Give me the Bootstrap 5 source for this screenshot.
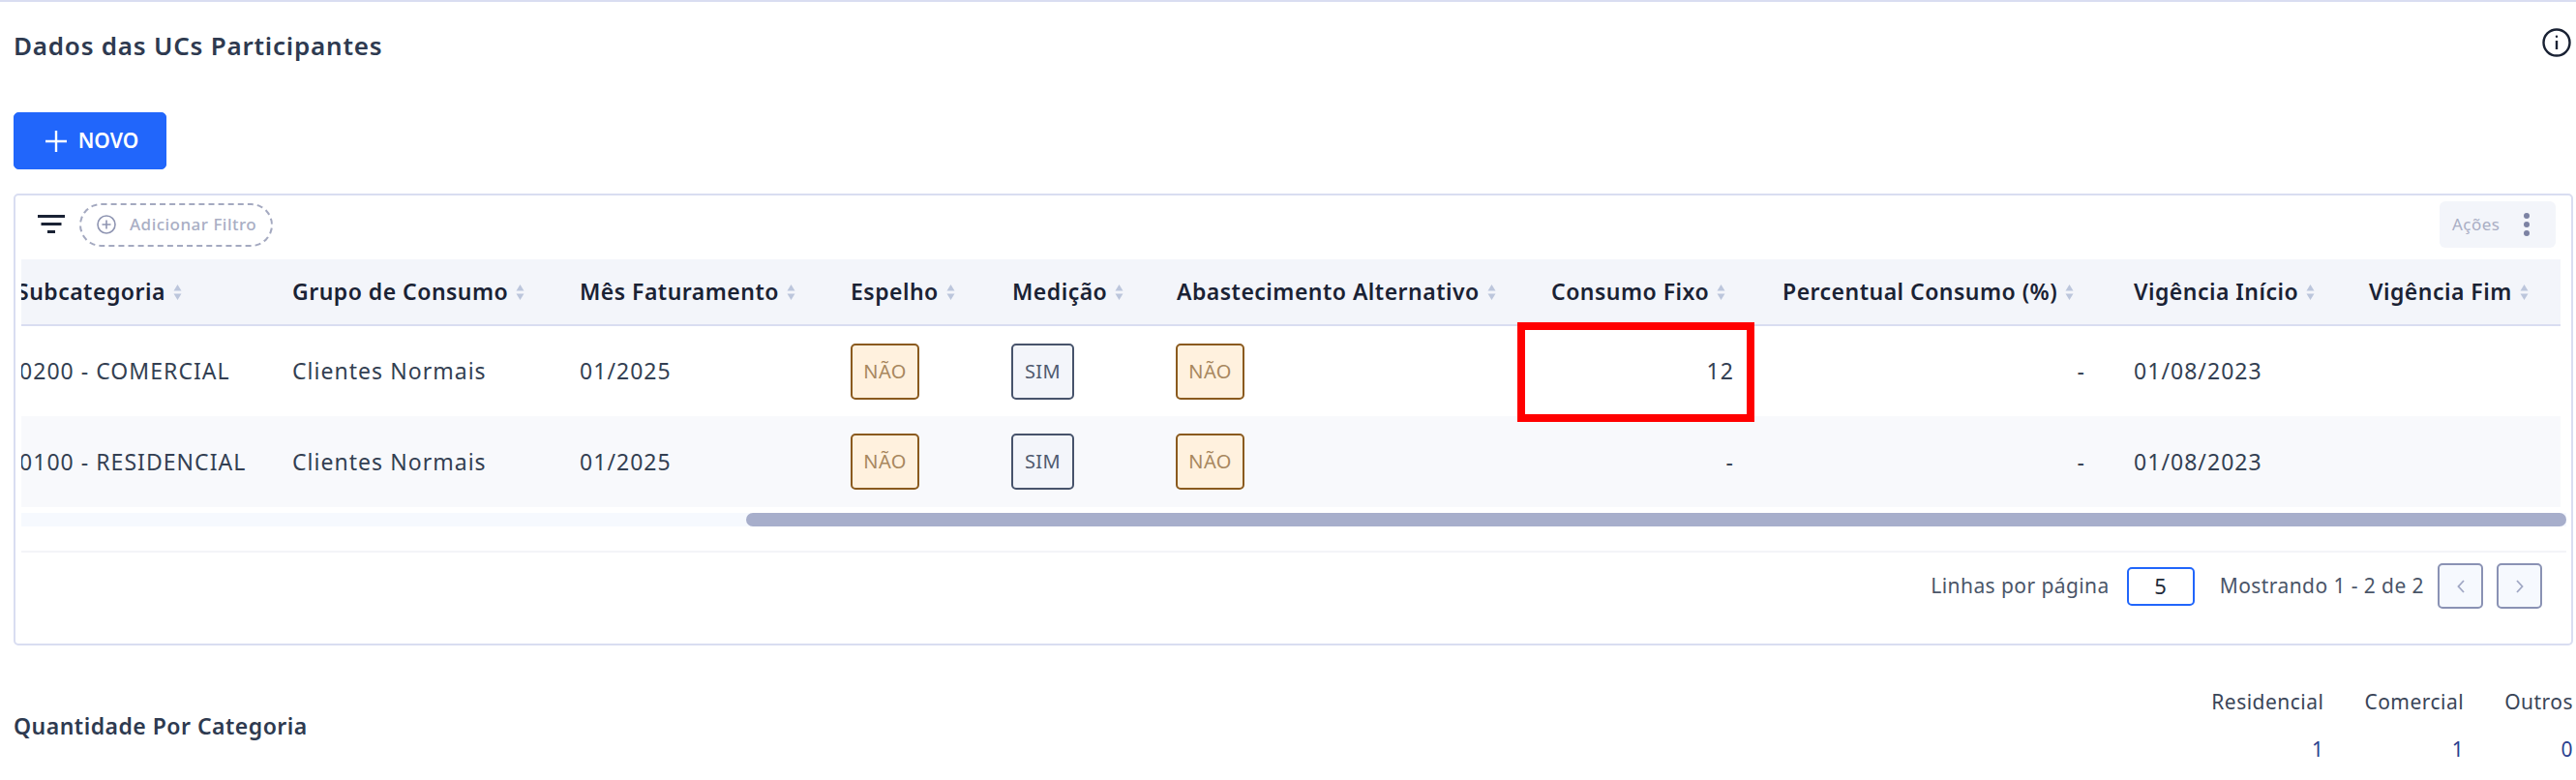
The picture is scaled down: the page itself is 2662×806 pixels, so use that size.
<!DOCTYPE html>
<html lang="pt-BR">
<head>
    <meta charset="UTF-8">
    <meta name="viewport" content="width=device-width, initial-scale=1.0">
    <title>Dados das UCs Participantes</title>
    <link href="https://cdn.jsdelivr.net/npm/bootstrap@5.3.0/dist/css/bootstrap.min.css" rel="stylesheet">
    <style>
        body {
            font-family: "Noto Sans", "Liberation Sans", sans-serif;
            letter-spacing: .03em;
            background: #fff;
            color: #2e3a50;
            overflow: hidden;
        }
        .page-wrap {
            height: 806px;
            border-top: 2px solid #d9ddf1;
            padding: 0 3px 0 14px;
            overflow: hidden;
        }
        .page-head {
            height: 114px;
            padding-top: 27px;
        }
        .page-title {
            font-size: 26px;
            font-weight: 600;
            line-height: 36px;
            letter-spacing: .03em;
            color: #2e3a50;
            margin: 0;
        }
        .info-icon { margin-right: 2px; }
        .btn-novo {
            width: 158px;
            height: 59px;
            padding: 0 0 0 4px;
            border-radius: 5px;
            background: #2166fb;
            border: 1px solid #2166fb;
            font-size: 21px;
            font-weight: 600;
            gap: 12px;
        }
        .grid-card {
            margin-top: 25px;
            height: 467px;
            border: 2px solid #d9ddf1;
            border-radius: 5px;
            padding: 6px 5px 0 6px;
        }
        .grid-tools { height: 48px; margin-bottom: 12px; }
        .filter-icon { margin-left: 17px; margin-right: 15px; }
        .add-filter {
            width: 200px;
            height: 45px;
            border: 2px dashed #a4a9c0;
            border-radius: 23px;
            padding-left: 16px;
            gap: 14px;
            color: #a9aec4;
            font-size: 17px;
            font-weight: 500;
            background: #fff;
            white-space: nowrap;
        }
        .acoes-box {
            width: 120px;
            height: 48px;
            margin-right: 11px;
            background: #f3f5fa;
            border-radius: 6px;
            padding: 0 27px 0 13px;
            color: #a9aec4;
            font-size: 17px;
        }
        .grid-scroll {
            margin-right: 6px;
            overflow: hidden;
        }
        .uc-table {
            table-layout: fixed;
            width: 2629px;
            margin: 0 0 0 -5px;
            font-size: 23px;
            color: #2e3a50;
            border-collapse: collapse;
        }
        .uc-table th {
            height: 68px;
            padding: 0;
            background: #f3f5fa;
            border-bottom: 2px solid #d9ddf1;
            color: #1a2234;
            font-weight: 600;
            vertical-align: middle;
            white-space: nowrap;
        }
        .uc-table td {
            height: 94px;
            padding: 0;
            border: 0;
            vertical-align: middle;
            white-space: nowrap;
            background: transparent;
            color: #333f52;
            letter-spacing: .045em;
        }
        .uc-table td:first-child { padding-left: 3px; }
        .uc-table tbody tr:nth-child(2) td { background: #f8f9fc; }
        .uc-table td:nth-child(5) .flag-tag { margin-left: -1px; }
        .uc-table td:nth-child(6) .flag-tag { margin-left: -1px; }
        .sort-icon { margin-left: 8px; vertical-align: -1px; }
        .col-sub { width: 285px; }
        .col-grupo { width: 297px; }
        .col-mes { width: 280px; }
        .col-esp { width: 167px; }
        .col-med { width: 170px; }
        .col-aba { width: 387px; }
        .col-con { width: 239px; }
        .col-per { width: 363px; }
        .col-ini { width: 243px; }
        .col-fim { width: 198px; }
        .num-cell { text-align: right; padding-right: 50px !important; }
        .flag-tag {
            display: inline-flex;
            align-items: center;
            justify-content: center;
            height: 58px;
            border-radius: 5px;
            border: 2px solid;
            font-size: 20px;
            letter-spacing: .02em;
        }
        .flag-no { width: 71px; background: #fff1de; border-color: #8a5a1e; color: #a8875e; }
        .flag-yes { width: 65px; background: #f3f5fa; border-color: #47536b; color: #4f5a6e; }
        .mark-cell { position: relative; }
        .red-mark {
            position: absolute;
            left: -35px;
            right: 29px;
            top: -4px;
            bottom: -6px;
            border: 8px solid #ff0000;
            pointer-events: none;
        }
        .fake-scroll {
            height: 14px;
            margin-top: 6px;
            background: #f6f9fe;
        }
        .fake-thumb {
            width: 1881px;
            height: 14px;
            background: #a7aecb;
            border-radius: 7px;
        }
        .pager-row {
            height: 60px;
            margin-top: 25px;
            border-top: 2px solid #f3f4f8;
            padding: 11px 25px 0 0;
            font-size: 21px;
            letter-spacing: .02em;
            color: #4a5568;
        }
        .pager-size {
            width: 70px;
            height: 40px;
            margin: 0 26px 0 18px;
            border: 2px solid #2166fb;
            border-radius: 5px;
            color: #222b3a;
            font-size: 22px;
        }
        .pager-btn {
            width: 47px;
            height: 47px;
            padding: 0;
            background: #f6f9fe;
            border: 2px solid #8a92b4;
            border-radius: 5px;
        }
        .pager-info { margin-right: 14px; }
        .pager-btn + .pager-btn { margin-left: 14px; }
        .bottom-row { margin-top: 43px; }
        .bottom-title {
            font-size: 23px;
            font-weight: 600;
            color: #2e3a50;
            margin: 0;
            padding-top: 27px;
        }
        .cat-col { text-align: right; margin-left: 42px; font-size: 21px; color: #3a4558; }
        .cat-col div:last-child { margin-top: 17px; color: #2b3f8f; }
    </style>
</head>
<body>
    <div class="page-wrap">
        <div class="page-head d-flex justify-content-between align-items-start">
            <h1 class="page-title">Dados das UCs Participantes</h1>
            <svg class="info-icon" width="30" height="30" viewBox="0 0 30 30" fill="none" stroke="#1a2234" stroke-width="2.4">
                <circle cx="15" cy="15" r="13.5"/>
                <path d="M15 13v9"/>
                <circle cx="15" cy="8.8" r="1.2" fill="#1a2234" stroke="none"/>
            </svg>
        </div>

        <button class="btn btn-primary btn-novo d-flex align-items-center justify-content-center" type="button">
            <svg width="22" height="22" viewBox="0 0 22 22" stroke="#fff" stroke-width="2.4"><path d="M11 0v22M0 11h22"/></svg>
            <span>NOVO</span>
        </button>

        <div class="card grid-card">
            <div class="grid-tools d-flex align-items-center">
                <svg class="filter-icon" width="28" height="20" viewBox="0 0 28 20" fill="#1a2234">
                    <rect x="0" y="0" width="28" height="3"/>
                    <rect x="3.5" y="8" width="21" height="3"/>
                    <rect x="10" y="16" width="8" height="3"/>
                </svg>
                <div class="add-filter d-flex align-items-center">
                    <svg width="20" height="20" viewBox="0 0 20 20" fill="none" stroke="#8f95b2" stroke-width="1.6">
                        <circle cx="10" cy="10" r="9"/>
                        <path d="M10 5.5v9M5.5 10h9"/>
                    </svg>
                    <span>Adicionar Filtro</span>
                </div>
                <div class="acoes-box ms-auto d-flex align-items-center justify-content-between">
                    <span>Ações</span>
                    <svg width="6" height="24" viewBox="0 0 6 24" fill="#7c82a3">
                        <circle cx="3" cy="3" r="3"/><circle cx="3" cy="12" r="3"/><circle cx="3" cy="21" r="3"/>
                    </svg>
                </div>
            </div>

            <div class="grid-scroll">
                <table class="table uc-table">
                    <colgroup>
                        <col class="col-sub"><col class="col-grupo"><col class="col-mes"><col class="col-esp"><col class="col-med">
                        <col class="col-aba"><col class="col-con"><col class="col-per"><col class="col-ini"><col class="col-fim">
                    </colgroup>
                    <thead>
                        <tr id="headRow"></tr>
                    </thead>
                    <tbody>
                        <tr>
                            <td>0200 - COMERCIAL</td>
                            <td>Clientes Normais</td>
                            <td>01/2025</td>
                            <td><span class="flag-tag flag-no">NÃO</span></td>
                            <td><span class="flag-tag flag-yes">SIM</span></td>
                            <td><span class="flag-tag flag-no">NÃO</span></td>
                            <td class="num-cell mark-cell">12<span class="red-mark"></span></td>
                            <td class="num-cell">-</td>
                            <td>01/08/2023</td>
                            <td></td>
                        </tr>
                        <tr>
                            <td>0100 - RESIDENCIAL</td>
                            <td>Clientes Normais</td>
                            <td>01/2025</td>
                            <td><span class="flag-tag flag-no">NÃO</span></td>
                            <td><span class="flag-tag flag-yes">SIM</span></td>
                            <td><span class="flag-tag flag-no">NÃO</span></td>
                            <td class="num-cell">-</td>
                            <td class="num-cell">-</td>
                            <td>01/08/2023</td>
                            <td></td>
                        </tr>
                    </tbody>
                </table>
            </div>

            <div class="fake-scroll d-flex justify-content-end">
                <div class="fake-thumb"></div>
            </div>

            <div class="pager-row d-flex justify-content-end align-items-center">
                <span>Linhas por página</span>
                <span class="pager-size d-flex align-items-center justify-content-center">5</span>
                <span class="pager-info">Mostrando 1 - 2 de 2</span>
                <button class="btn pager-btn d-flex align-items-center justify-content-center" type="button">
                    <svg width="8" height="14" viewBox="0 0 8 14" fill="none" stroke="#a0a7c4" stroke-width="1.8"><path d="M7 1 1.5 7 7 13"/></svg>
                </button>
                <button class="btn pager-btn d-flex align-items-center justify-content-center" type="button">
                    <svg width="8" height="14" viewBox="0 0 8 14" fill="none" stroke="#a0a7c4" stroke-width="1.8"><path d="M1 1l5.5 6L1 13"/></svg>
                </button>
            </div>
        </div>

        <div class="bottom-row d-flex justify-content-between align-items-start">
            <h2 class="bottom-title">Quantidade Por Categoria</h2>
            <div class="d-flex">
                <div class="cat-col"><div>Residencial</div><div>1</div></div>
                <div class="cat-col"><div>Comercial</div><div>1</div></div>
                <div class="cat-col"><div>Outros</div><div>0</div></div>
            </div>
        </div>
    </div>

    <script src="https://cdn.jsdelivr.net/npm/bootstrap@5.3.0/dist/js/bootstrap.bundle.min.js"></script>
    <script>
        const columns = ['Subcategoria', 'Grupo de Consumo', 'Mês Faturamento', 'Espelho', 'Medição',
            'Abastecimento Alternativo', 'Consumo Fixo', 'Percentual Consumo (%)', 'Vigência Início', 'Vigência Fim'];
        const sortIcon = '<svg class="sort-icon" width="9" height="18" viewBox="0 0 9 18" fill="#bcc6dc"><path d="M4.5 1 8.5 7.5H.5zM4.5 17 .5 10.5h8z"/></svg>';
        document.getElementById('headRow').innerHTML = columns.map(c => `<th>${c}${sortIcon}</th>`).join('');
    </script>
</body>
</html>
